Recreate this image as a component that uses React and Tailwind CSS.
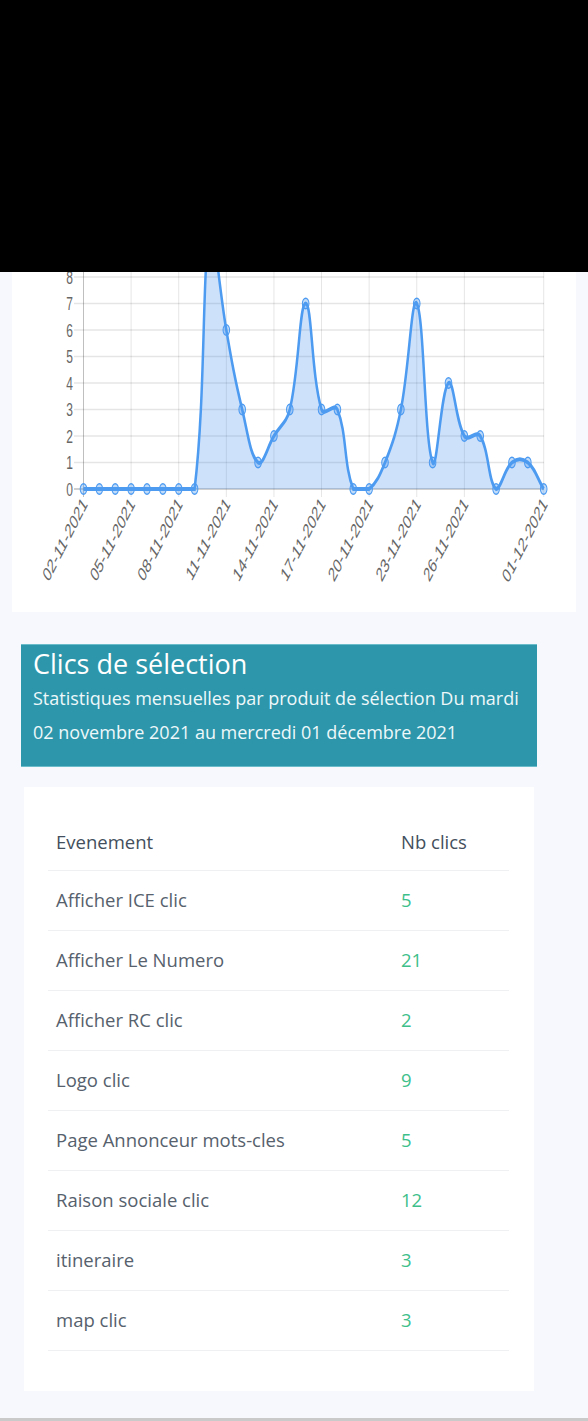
const K = 1.6;

const data = [0, 0, 0, 0, 0, 0, 0, 0, 10, 6, 3, 1, 2, 3, 7, 3, 3, 0, 0, 1, 3, 7, 1, 4, 2, 2, 0, 1, 1, 0];

const pad = (n) => String(n).padStart(2, "0");

const labels = data.map((_, i) => {
  const d = new Date(2021, 10, 2 + i);
  return `${pad(d.getDate())}-${pad(d.getMonth() + 1)}-${d.getFullYear()}`;
});

const shownTicks = [0, 3, 6, 9, 12, 15, 18, 21, 24, 29];

const X0 = 71.5;
const DX = (531.7 - 71.5) / 29;
const Y0 = (489 - 272) / K;
const UNIT = 26.5 / K;
const TOP = Y0 - 10 * UNIT;

const px = (i) => X0 + i * DX;
const py = (v) => Y0 - v * UNIT;

const clamp = (v, a, b) => Math.max(a, Math.min(b, v));

const buildPath = () => {
  const pts = data.map((v, i) => ({ x: px(i), y: py(v) }));
  const t = 0.4;

  const cps = pts.map((cur, i) => {
    const prev = pts[i - 1] || cur;
    const next = pts[i + 1] || cur;
    const d01 = Math.hypot(cur.x - prev.x, cur.y - prev.y);
    const d12 = Math.hypot(next.x - cur.x, next.y - cur.y);
    let s01 = d01 / (d01 + d12);
    let s12 = d12 / (d01 + d12);
    if (isNaN(s01)) s01 = 0;
    if (isNaN(s12)) s12 = 0;
    const fa = t * s01;
    const fb = t * s12;
    return {
      px: cur.x - fa * (next.x - prev.x),
      py: clamp(cur.y - fa * (next.y - prev.y), TOP, Y0),
      nx: cur.x + fb * (next.x - prev.x),
      ny: clamp(cur.y + fb * (next.y - prev.y), TOP, Y0)
    };
  });

  let d = `M${pts[0].x},${pts[0].y}`;
  for (let i = 1; i < pts.length; i++) {
    const a = cps[i - 1];
    const b = cps[i];
    d += ` C${a.nx},${a.ny} ${b.px},${b.py} ${pts[i].x},${pts[i].y}`;
  }
  return { d, pts };
};

const LineChart = () => {
  const { d, pts } = buildPath();
  const fillD = `${d} L${px(29)},${Y0} L${px(0)},${Y0} Z`;

  return (
    <svg width="564" height="340" viewBox={`0 0 564 ${340 / K}`} preserveAspectRatio="none">
      {/* horizontal grid */}
      {Array.from({ length: 11 }).map((_, v) => (
        <line
          key={v}
          x1="62"
          x2="532"
          y1={py(v)}
          y2={py(v)}
          stroke={v === 0 ? "rgba(0,0,0,0.25)" : "rgba(0,0,0,0.1)"}
          strokeWidth="1"
        />
      ))}

      {/* vertical grid */}
      {shownTicks.map((i) => (
        <line
          key={i}
          x1={px(i)}
          x2={px(i)}
          y1={TOP - 20}
          y2={Y0 + 5}
          stroke={i === 0 ? "rgba(0,0,0,0.25)" : "rgba(0,0,0,0.1)"}
          strokeWidth="1"
        />
      ))}

      {/* y labels */}
      {Array.from({ length: 9 }).map((_, v) => (
        <text
          key={v}
          x="61"
          y={py(v)}
          dy="0.36em"
          textAnchor="end"
          fontSize="12"
          fill="#666"
          fontFamily="'Liberation Sans', Arial, sans-serif"
        >
          {v}
        </text>
      ))}

      {/* x labels */}
      {shownTicks.map((i) => (
        <text
          key={i}
          transform={`translate(${px(i) + 1}, ${(500 - 272) / K}) rotate(-51)`}
          dy="0.36em"
          textAnchor="end"
          fontSize="12.5"
          fill="#666"
          fontFamily="'Liberation Sans', Arial, sans-serif"
        >
          {labels[i]}
        </text>
      ))}

      <path d={fillD} fill="rgba(66,140,240,0.26)" />
      <path d={d} fill="none" stroke="#4d9bf1" strokeWidth="2.5" />

      {pts.map((p, i) => (
        <circle
          key={i}
          cx={p.x}
          cy={p.y}
          r="3.3"
          fill="rgba(77,155,241,0.35)"
          stroke="#4d9bf1"
          strokeWidth="1"
        />
      ))}
    </svg>
  );
};

const rows = [
  { name: "Afficher ICE clic", count: 5 },
  { name: "Afficher Le Numero", count: 21 },
  { name: "Afficher RC clic", count: 2 },
  { name: "Logo clic", count: 9 },
  { name: "Page Annonceur mots-cles", count: 5 },
  { name: "Raison sociale clic", count: 12 },
  { name: "itineraire", count: 3 },
  { name: "map clic", count: 3 }
];

const App = () => {
  return (
    <div className="w-[588px] min-h-[1421px] bg-[#f6f8fd] flex flex-col font-['Open_Sans',sans-serif]">

      {/* covered top */}
      <div className="h-[272px] bg-black" />

      {/* Chart card */}
      <div className="ml-[12px] w-[564px] h-[340px] bg-white overflow-hidden">
        <LineChart />
      </div>

      {/* Section header */}
      <div className="mt-[32px] ml-[21px] w-[516px] h-[123px] bg-[#2d96aa] border-y border-[#6bbccb] px-[12px] pt-[2px] text-white">
        <h2 className="text-[27px] leading-[34px]">Clics de sélection</h2>
        <p className="text-[18px] leading-[34px] text-[#eef8fa] whitespace-nowrap">
          Statistiques mensuelles par produit de sélection Du mardi
          <br />
          02 novembre 2021 au mercredi 01 décembre 2021
        </p>
      </div>

      {/* Table card */}
      <div className="mt-[20px] ml-[24px] w-[510px] bg-white pt-[28px] pb-[40px] px-[24px]">
        <table className="w-[461px] text-[18.5px]">
          <thead>
            <tr className="border-b border-[#eef0f2]">
              <th className="h-[55px] pl-[8px] text-left font-normal text-[#434f5c]">Evenement</th>
              <th className="h-[55px] w-[116px] pl-[8px] text-left font-normal text-[#434f5c]">Nb clics</th>
            </tr>
          </thead>
          <tbody>
            {rows.map((r) => (
              <tr key={r.name} className="border-b border-[#eef0f2]">
                <td className="h-[60px] pl-[8px] text-[#56616d]">{r.name}</td>
                <td className="h-[60px] pl-[8px] text-[#3ec08b]">{r.count}</td>
              </tr>
            ))}
          </tbody>
        </table>
      </div>

      <div className="flex-1" />
      <div className="h-[3px] bg-[#cacaca]" />
    </div>
  );
};

export default App;
